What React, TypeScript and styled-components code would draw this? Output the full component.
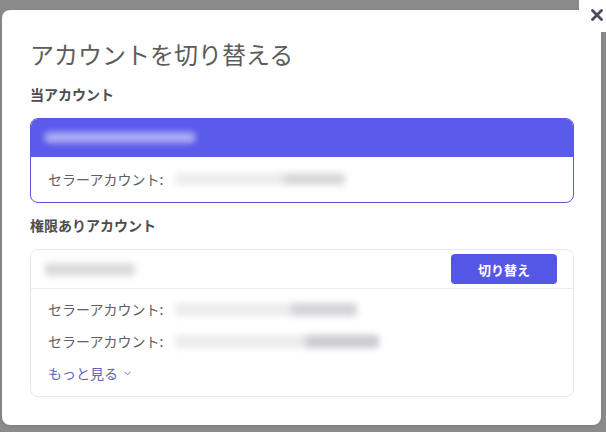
import styled, { createGlobalStyle } from "styled-components";
import { ChevronDown } from "lucide-react";

const GlobalStyle = createGlobalStyle`
  html, body {
    margin: 0;
    padding: 0;
    background: #898b8d;
  }
  body {
    font-family: "Noto Sans CJK JP", "Noto Sans", sans-serif;
    width: 606px;
    height: 432px;
    overflow: hidden;
  }
`;

const Backdrop = styled.div`
  position: relative;
  width: 606px;
  height: 432px;
  padding: 10px 0 0 2px;
  box-sizing: border-box;
`;

const Modal = styled.div`
  width: 599px;
  height: 415px;
  box-sizing: border-box;
  background: #fff;
  border-radius: 8px;
  padding: 28px 27px 0 28px;
  display: flex;
  flex-direction: column;
  box-shadow: 0 1px 4px rgba(0, 0, 0, 0.12);
`;

const CloseButton = styled.button`
  position: absolute;
  top: 0;
  right: 0;
  width: 27px;
  height: 32px;
  border: none;
  padding: 0 3px 2px 0;
  background: #fff;
  border-radius: 0 0 0 6px;
  display: flex;
  align-items: center;
  justify-content: flex-end;
  color: #4a4a5c;
  cursor: pointer;
`;

const Title = styled.h2`
  margin: 0;
  font-size: 24px;
  line-height: 32px;
  font-weight: 400;
  color: #5c5c5c;
`;

const SectionLabel = styled.div<{ $top: number }>`
  margin-top: ${(p) => p.$top}px;
  font-size: 14px;
  line-height: 20px;
  font-weight: 700;
  color: #4d4d4d;
`;

const Card = styled.div<{ $active?: boolean }>`
  margin-top: 14px;
  border: 1px solid ${(p) => (p.$active ? "#5a5ad6" : "#e7e7eb")};
  border-radius: 8px;
  overflow: hidden;
  background: #fff;
`;

const CardHeader = styled.div<{ $active?: boolean }>`
  height: ${(p) => (p.$active ? 37 : 38)}px;
  display: flex;
  align-items: center;
  justify-content: space-between;
  padding: 0 16px 0 14px;
  background: ${(p) => (p.$active ? "#5a5aeb" : "#fff")};
  border-bottom: 1px solid ${(p) => (p.$active ? "#5a5aeb" : "#ececf0")};
`;

const CardBody = styled.div<{ $active?: boolean }>`
  padding: ${(p) => (p.$active ? "6px 17px 7px" : "4px 17px 7px")};
`;

const Row = styled.div`
  height: 32px;
  display: flex;
  align-items: center;
  font-size: 14px;
  color: #606060;
`;

const Blur = styled.div<{ $w: number; $h: number; $color: string; $dark?: string }>`
  width: ${(p) => p.$w}px;
  height: ${(p) => p.$h}px;
  border-radius: 3px;
  background: ${(p) =>
    p.$dark
      ? `linear-gradient(to right, ${p.$color} 0%, ${p.$color} 62%, ${p.$dark} 66%, ${p.$dark} 100%)`
      : p.$color};
  filter: blur(3px);
`;

const ValueBlur = styled(Blur)`
  margin-left: 12px;
`;

const SwitchButton = styled.button`
  width: 106px;
  height: 30px;
  border: none;
  border-radius: 4px;
  background: #5457e6;
  color: #fff;
  font-family: inherit;
  font-size: 13px;
  font-weight: 700;
  cursor: pointer;
`;

const MoreLink = styled.a`
  display: inline-flex;
  align-items: center;
  gap: 4px;
  font-size: 14px;
  color: #6464bc;
  text-decoration: none;
  cursor: pointer;
`;

const sellerRows = [
  { w: 182, dark: "#d4d4da" },
  { w: 204, dark: "#cbcbd2" },
];

export default function App() {
  return (
    <>
      <GlobalStyle />
      <Backdrop>
        <Modal>
          <Title>アカウントを切り替える</Title>

          <SectionLabel $top={14}>当アカウント</SectionLabel>
          <Card $active>
            <CardHeader $active>
              <Blur $w={150} $h={11} $color="rgba(255,255,255,0.5)" />
            </CardHeader>
            <CardBody $active>
              <Row>
                セラーアカウント:
                <ValueBlur $w={170} $h={12} $color="#ededf0" $dark="#d8d8dc" />
              </Row>
            </CardBody>
          </Card>

          <SectionLabel $top={12}>権限ありアカウント</SectionLabel>
          <Card>
            <CardHeader>
              <Blur $w={90} $h={13} $color="#dcdce0" />
              <SwitchButton>切り替え</SwitchButton>
            </CardHeader>
            <CardBody>
              {sellerRows.map((r, i) => (
                <Row key={i}>
                  セラーアカウント:
                  <ValueBlur $w={r.w} $h={13} $color="#ececef" $dark={r.dark} />
                </Row>
              ))}
              <Row>
                <MoreLink>
                  もっと見る
                  <ChevronDown size={11} strokeWidth={2} />
                </MoreLink>
              </Row>
            </CardBody>
          </Card>
        </Modal>
        <CloseButton aria-label="閉じる">
          <svg width="12" height="12" viewBox="0 0 12 12">
            <path d="M1.5 1.5 L10.5 10.5 M10.5 1.5 L1.5 10.5" stroke="currentColor" strokeWidth="2.8" strokeLinecap="round" />
          </svg>
        </CloseButton>
      </Backdrop>
    </>
  );
}
